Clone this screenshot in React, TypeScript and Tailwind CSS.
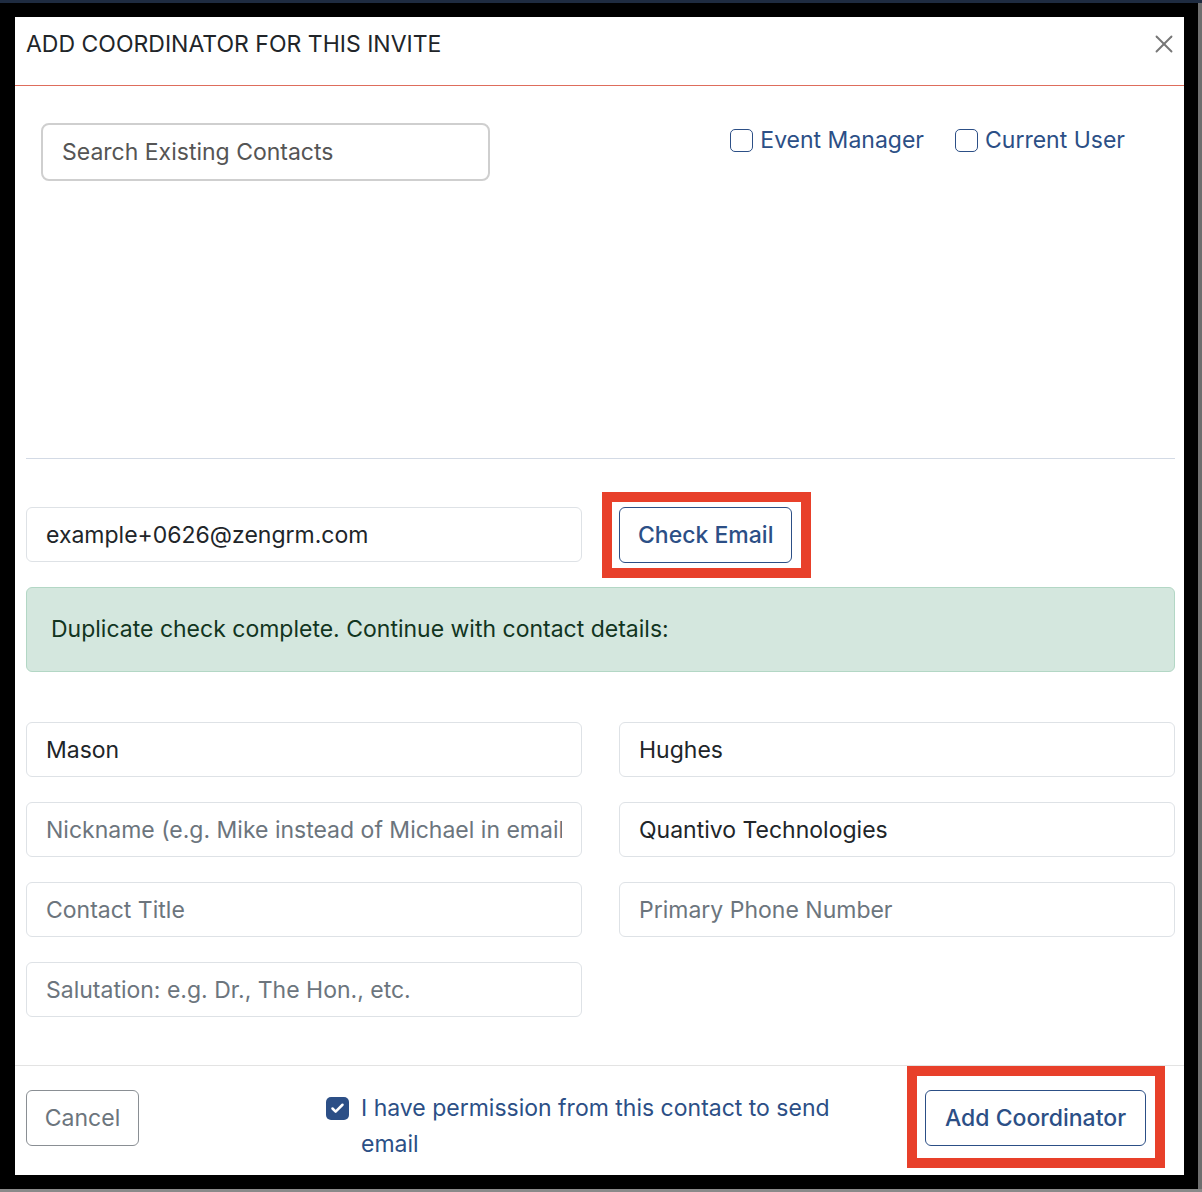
import { X, Check } from 'lucide-react';

const navy = 'text-[#2c4f86]';

function Field({ value, placeholder }: { value?: string; placeholder?: string }) {
  return (
    <input
      readOnly
      value={value ?? ''}
      placeholder={placeholder}
      className="h-[55px] w-full rounded-[6px] border border-[#dee2e6] bg-white px-[19px] text-[23px] text-[#212529] placeholder:text-[#6c757d] outline-none"
    />
  );
}

function Box({ checked }: { checked?: boolean }) {
  if (checked) {
    return (
      <span className="flex h-[23px] w-[23px] shrink-0 items-center justify-center rounded-[5px] bg-[#2c4f86]">
        <Check size={15} strokeWidth={4} className="text-white" />
      </span>
    );
  }
  return <span className="h-[23px] w-[23px] shrink-0 rounded-[5px] border border-[#2c4f86] bg-white" />;
}

// red outline drawn over a button, sits outside the button's own box
function Highlight({ children, inset }: { children: React.ReactNode; inset: string }) {
  return (
    <div className="relative">
      <span className={`pointer-events-none absolute border-[10px] border-[#e8402a] ${inset}`} />
      {children}
    </div>
  );
}

export default function App() {
  return (
    <div className="flex h-[1192px] w-[1202px] flex-col bg-black font-['Inter',sans-serif]">
      <div className="h-[3px] bg-[#1e2b40]" />
      <div className="flex flex-1">
        <div className="pl-[15px] pt-[14px]">
          <div className="flex h-[1158px] w-[1169px] flex-col bg-white">
            {/* header */}
            <div className="flex h-[69px] items-start justify-between border-b border-[#de6d5c] pl-[11px] pr-[5px] pt-[12px]">
              <h2 className="text-[23px] font-normal leading-[30px] text-[#212529]">ADD COORDINATOR FOR THIS INVITE</h2>
              <X size={30} strokeWidth={1.5} className="text-[#777]" />
            </div>

            <div className="flex flex-1 flex-col pl-[11px] pr-[9px]">
              {/* contact search */}
              <div className="flex h-[372px] items-start justify-between pl-[15px] pr-[50px] pt-[37px]">
                <input
                  readOnly
                  placeholder="Search Existing Contacts"
                  className="h-[58px] w-[449px] rounded-[8px] border-2 border-[#cfcfcf] px-[19px] text-[23px] placeholder:text-[#555] outline-none"
                />
                <div className={`flex items-center gap-[31px] pt-[2px] text-[23px] leading-[30px] ${navy}`}>
                  <label className="flex items-center gap-[7px]">
                    <Box />
                    Event Manager
                  </label>
                  <label className="flex items-center gap-[7px]">
                    <Box />
                    Current User
                  </label>
                </div>
              </div>
              <div className="h-px bg-[#d3dae5]" />

              {/* email check */}
              <div className="mt-[48px] grid grid-cols-2 gap-x-[37px]">
                <Field value="example+0626@zengrm.com" />
                <div className="flex">
                  <Highlight inset="-left-[17px] -top-[15px] -right-[19px] -bottom-[15px]">
                    <button className={`h-[56px] rounded-[6px] border border-[#2c4f86] px-[18px] text-[23px] font-medium ${navy}`}>
                      Check Email
                    </button>
                  </Highlight>
                </div>
              </div>

              <div className="mt-[24px] flex h-[85px] items-center rounded-[6px] border border-[#b3d7c5] bg-[#d4e7de] px-[24px] text-[23px] text-[#12351f]">
                Duplicate check complete. Continue with contact details:
              </div>

              {/* contact details */}
              <div className="mt-[50px] grid grid-cols-2 gap-x-[37px] gap-y-[25px]">
                <Field value="Mason" />
                <Field value="Hughes" />
                <Field placeholder="Nickname (e.g. Mike instead of Michael in emails)" />
                <Field value="Quantivo Technologies" />
                <Field placeholder="Contact Title" />
                <Field placeholder="Primary Phone Number" />
                <Field placeholder="Salutation: e.g. Dr., The Hon., etc." />
              </div>
            </div>

            {/* footer */}
            <div className="flex h-[110px] items-start border-t border-[#e3e3e3] pl-[11px] pt-[24px]">
              <button className="h-[56px] w-[113px] rounded-[6px] border border-[#8a8f94] text-[23px] text-[#6c757d]">
                Cancel
              </button>
              <label className={`ml-[187px] flex w-[520px] items-start gap-[12px] text-[23px] leading-[36px] ${navy}`}>
                <span className="mt-[7px]">
                  <Box checked />
                </span>
                <span>I have permission from this contact to send email</span>
              </label>
              <div className="ml-auto mr-[38px]">
                <Highlight inset="-left-[18px] -top-[24px] -right-[19px] -bottom-[22px]">
                  <button className={`h-[56px] w-[221px] rounded-[6px] border border-[#2c4f86] text-[23px] font-medium ${navy}`}>
                    Add Coordinator
                  </button>
                </Highlight>
              </div>
            </div>
          </div>
        </div>
        <div className="flex-1" />
        <div className="w-[4px] bg-[#6e6e6e]" />
      </div>
      <div className="h-[3px] bg-[#8a8a8a]" />
    </div>
  );
}
